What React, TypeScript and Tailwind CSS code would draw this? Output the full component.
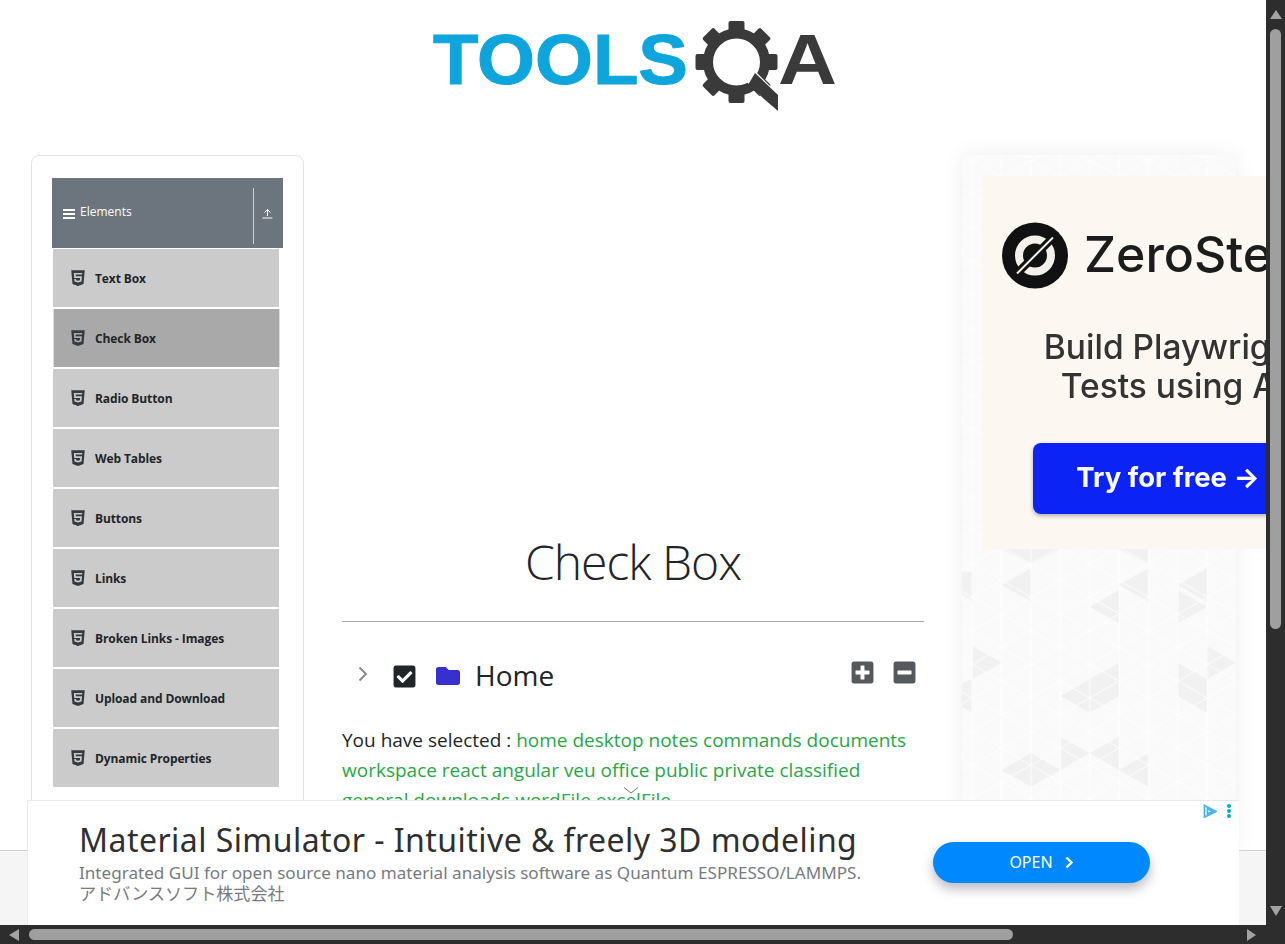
import { FaHtml5, FaFolder, FaCheckSquare, FaPlusSquare, FaMinusSquare } from 'react-icons/fa'

const menu = ['Text Box', 'Check Box', 'Radio Button', 'Web Tables', 'Buttons', 'Links', 'Broken Links - Images', 'Upload and Download', 'Dynamic Properties']
const selected = 'home desktop notes commands documents workspace react angular veu office public private classified general downloads wordFile excelFile'

// triangles read off the reference, in crop coordinates (3x)
const triangles = [
  '140,135 228,85 228,185', '492,135 580,85 580,185', '668,135 756,85 756,185', '668,150 756,200 668,250',
  '404,200 492,150 492,250', '52,318 140,368 52,418', '756,318 844,368 756,418', '404,418 492,368 492,468',
  '668,368 756,418 668,468', '668,468 756,418 756,518', '316,468 404,418 404,518', '404,418 492,468 404,518',
  '316,590 404,640 316,690', '404,640 492,590 492,690', '492,690 580,640 580,740', '140,690 228,640 228,740',
  '228,640 316,690 228,740', '228,27 316,27 228,72', '140,27 228,27 228,72', '492,27 580,27 580,72',
  '20,95 52,95 52,185 20,165', '20,430 52,418 52,518 20,500',
]

function Logo() {
  const teeth = [0, 45, 90, 135, 180, 225, 270, 315]
  return (
    <svg width="408" height="100" viewBox="429 15 408 100">
      <text x="433" y="84" fontFamily="'Liberation Sans', sans-serif" fontWeight="700" fontSize="70" fill="#0ea5dc" stroke="#0ea5dc" strokeWidth="1" textLength="255" lengthAdjust="spacingAndGlyphs">TOOLS</text>
      <g fill="#3a3a3a">
        <circle cx="736.5" cy="62" r="28.5" fill="none" stroke="#3a3a3a" strokeWidth="10" />
        {teeth.map((a) => (
          <rect key={a} x="728.5" y="21" width="16" height="13" rx="2" transform={`rotate(${a} 736.5 62)`} />
        ))}
        <polygon points="752,68 778,94 778,114 745,80" fill="#fff" />
        <polygon points="755,73 778,95 778,111 748,85" />
      </g>
      <text x="778" y="84" fontFamily="'Liberation Sans', sans-serif" fontWeight="700" fontSize="70" fill="#3a3a3a" textLength="59" lengthAdjust="spacingAndGlyphs">A</text>
    </svg>
  )
}

function AdPattern() {
  return (
    <svg className="absolute inset-0" width="274" height="700">
      <defs>
        <pattern id="tri" width="58.8" height="33.6" patternUnits="userSpaceOnUse" x="10.2" y="5.3">
          <path d="M0 0V33.6M29.4 0V33.6M58.8 0V33.6M0 0L58.8 33.6M0 33.6L58.8 0" stroke="#fff" strokeOpacity="0.8" strokeWidth="1" fill="none" />
        </pattern>
      </defs>
      <rect width="274" height="700" fill="#fafafa" />
      <g transform="translate(-7 385) scale(0.3333)" fill="#f1f1f1">
        {triangles.map((p) => <polygon key={p} points={p} />)}
      </g>
      <rect width="274" height="700" fill="url(#tri)" />
    </svg>
  )
}

function ZeroStepLogo() {
  return (
    <svg width="66" height="67" viewBox="0 0 66 66">
      <circle cx="33" cy="33" r="33" fill="#111" />
      <circle cx="33" cy="33" r="16" fill="none" stroke="#f3f0ea" strokeWidth="8" />
      <path d="M14 52L52 14" stroke="#111" strokeWidth="8" />
      <path d="M15 51L51 15" stroke="#f3f0ea" strokeWidth="2" />
    </svg>
  )
}

function Sidebar() {
  return (
    <aside className="w-[273px] shrink-0 rounded-lg border border-[#e2e2e2] bg-white px-5 pt-[22px] pb-4">
      <div className="flex h-[70px] items-center bg-[#6c757d] text-white">
        <div className="flex flex-1 items-center gap-[5px] pl-[11px] text-[12px] leading-none">
          <svg width="12" height="10" viewBox="0 0 12 10" className="mt-0.5" fill="#fff">
            <rect width="12" height="2" />
            <rect y="4" width="12" height="2" />
            <rect y="8" width="12" height="2" />
          </svg>
          <span className="-mt-0.5">Elements</span>
        </div>
        <div className="mb-1 flex h-[56px] w-[30px] items-start justify-center self-end border-l border-[#c9cdd0] pt-5 pr-0.5">
          <svg width="11" height="11" viewBox="0 0 11 11" fill="none" stroke="#fff" strokeWidth="1">
            <path d="M5.5 8V1.5M2.5 4.5L5.5 1.5L8.5 4.5M0.5 10H10.5" />
          </svg>
        </div>
      </div>
      <ul className="mt-px flex flex-col gap-[2px]">
        {menu.map((m) => (
          <li
            key={m}
            className={
              m === 'Check Box'
                ? 'ml-px flex h-[58px] w-[227px] items-center gap-[10px] border-x border-[#dcdcdc] bg-[#a9a9a9] pl-[17px] text-[12px] font-bold text-[#212529]'
                : 'ml-px flex h-[58px] w-[226px] items-center gap-[10px] bg-[#cbcbcb] pl-[18px] text-[12px] font-bold text-[#212529]'
            }
          >
            <FaHtml5 size={18} className="w-[14px] text-[#343a40]" />
            <span className="mt-0.5 tracking-[-0.1px]">{m}</span>
          </li>
        ))}
      </ul>
    </aside>
  )
}

function CheckBoxPanel() {
  return (
    <main className="ml-[38px] w-[582px] shrink-0 pt-[371px] text-[#212529]">
      <h1 className="text-center text-[48px] leading-[72px] font-light tracking-[-1px]">Check Box</h1>
      <hr className="mt-[23px] border-[#a9a9a9]" />
      <div className="mt-[34px] flex items-center pr-[7px] pl-4">
        <svg width="10" height="16" viewBox="0 0 10 16" fill="none" stroke="#8a8a8a" strokeWidth="2" className="-mt-1">
          <path d="M1.5 1.5L8 8L1.5 14.5" />
        </svg>
        <FaCheckSquare size={25} className="ml-[24px]" />
        <FaFolder size={24} className="ml-[19px] text-[#3730cf]" />
        <span className="ml-[15px] pb-0.5 text-[28px] leading-[38px]">Home</span>
        <div className="ml-auto -mt-2 flex gap-[17px] text-[#55585c]">
          <FaPlusSquare size={25} />
          <FaMinusSquare size={25} />
        </div>
      </div>
      <p className="mt-[29px] text-[19px] leading-[30px]">
        You have selected : <span className="text-[#28a745]">{selected}</span>
      </p>
    </main>
  )
}

function ZeroStepAd() {
  return (
    <div className="relative ml-[38px] h-[700px] w-[274px] shrink-0 pt-[21px] pl-5 shadow-[0_0_20px_rgba(0,0,0,0.07)]">
      <AdPattern />
      <div className="relative h-[373px] w-[382px] bg-[#fdf7f1] pt-[46px] font-['Inter',sans-serif] blur-[0.4px]">
        <div className="flex items-center gap-4 pl-5">
          <ZeroStepLogo />
          <span className="pb-1 text-[50px] font-medium leading-none text-[#1c1c1c]">ZeroStep</span>
        </div>
        <p className="mt-[39px] text-center text-[33.5px] leading-[39px] font-medium text-[#333]">
          Build Playwright<br />Tests using AI
        </p>
        <div className="mt-[37px] mr-[61px] ml-[51px] flex h-[71px] items-center justify-center rounded-lg bg-[#0b24f5] pb-0.5 text-[27.5px] font-bold text-white shadow-[0_2px_4px_rgba(0,0,0,0.3)]">
          Try for free →
        </div>
      </div>
    </div>
  )
}

function BottomAd() {
  return (
    <div className="absolute top-[800px] left-[27px] flex h-[125px] w-[1212px] items-center border-t border-l border-[#e8e8e8] bg-white pr-[89px] pb-1 pl-[51px] font-['Noto_Sans','Noto_Sans_CJK_JP',sans-serif]">
      <div className="flex-1">
        <div className="text-[32px] leading-[42px] tracking-[0.45px] text-[#2f2f2f]">Material Simulator - Intuitive &amp; freely 3D modeling</div>
        <div className="mt-px text-[17.1px] leading-[21px] text-[#777b80]">
          Integrated GUI for open source nano material analysis software as Quantum ESPRESSO/LAMMPS.<br />
          アドバンスソフト株式会社
        </div>
      </div>
      <div className="mt-0.5 flex h-[41px] w-[217px] items-center justify-center gap-3 rounded-full bg-[#0088ff] text-[16px] text-white shadow-[0_6px_12px_rgba(60,64,90,0.35)]">
        OPEN
        <svg width="9" height="13" viewBox="0 0 9 13" fill="none" stroke="#fff" strokeWidth="2.4">
          <path d="M1.5 1.5L6.5 6.5L1.5 11.5" />
        </svg>
      </div>
      <svg width="14" height="15" viewBox="0 0 14 15" className="absolute top-[3px] right-[22px]" fill="none" stroke="#4db4e8" strokeWidth="1.8">
        <path d="M1.5 1.5V13L13 7.5Z M4.5 4.5V10L9.5 7.5Z" />
      </svg>
      <svg width="4" height="14" viewBox="0 0 4 14" className="absolute top-[3px] right-2" fill="#00aecd">
        <circle cx="2" cy="2" r="2" />
        <circle cx="2" cy="7" r="2" />
        <circle cx="2" cy="12" r="2" />
      </svg>
    </div>
  )
}

export default function App() {
  return (
    <div className="flex h-[944px] w-[1285px] flex-col overflow-hidden bg-[#2d2d2d] font-['Open_Sans',sans-serif]">
      <div className="flex h-[925px]">
        <div className="relative w-[1266px] overflow-hidden bg-white">
          <header className="flex h-[155px] justify-center pt-[15px]">
            <Logo />
          </header>
          <div className="flex pl-[31px]">
            <Sidebar />
            <CheckBoxPanel />
            <ZeroStepAd />
          </div>
          <footer className="absolute top-[850px] right-0 left-0 h-[75px] border-t border-[#d0d0d0] bg-[#f5f5f5]" />
          <BottomAd />
          <svg width="16" height="7" viewBox="0 0 16 7" fill="none" stroke="#777" strokeWidth="1" className="absolute top-[787px] left-[623px]">
            <path d="M1 0.5L8 6L15 0.5" />
          </svg>
        </div>
        <div className="flex w-[19px] flex-col items-center pt-[10px]">
          <div className="h-0 w-0 border-x-[6px] border-b-[9px] border-x-transparent border-b-[#a3a3a3]" />
          <div className="mt-[10px] h-[600px] w-[11px] rounded-full bg-[#9f9f9f]" />
          <div className="mt-auto mb-[9px] h-0 w-0 border-x-[6px] border-t-[10px] border-x-transparent border-t-[#a3a3a3]" />
        </div>
      </div>
      <div className="flex h-[19px] items-center pr-[29px] pl-[9px]">
        <div className="h-0 w-0 border-y-[6px] border-r-[10px] border-y-transparent border-r-[#a3a3a3]" />
        <div className="ml-[10px] h-[11px] w-[984px] rounded-full bg-[#9f9f9f]" />
        <div className="ml-auto h-0 w-0 border-y-[6px] border-l-[9px] border-y-transparent border-l-[#a3a3a3]" />
      </div>
    </div>
  )
}
